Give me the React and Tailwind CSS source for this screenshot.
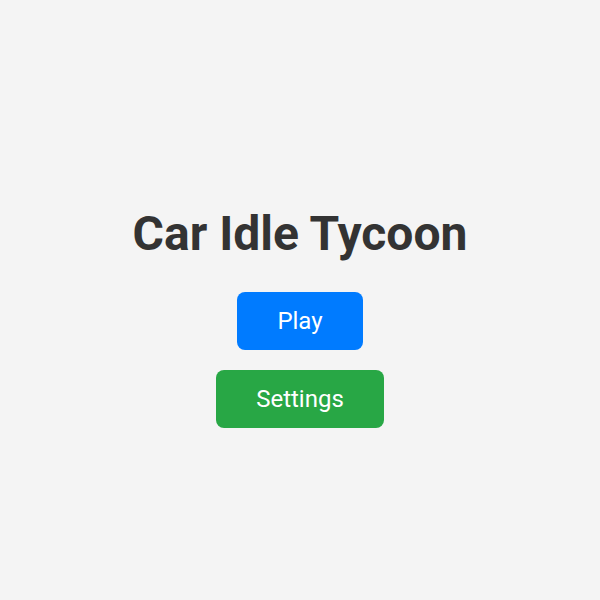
export default function App() {
  return (
    <div
      className="min-h-screen w-full bg-[#f4f4f4] flex flex-col items-center pt-[206px]"
      style={{ fontFamily: 'Roboto, "Liberation Sans", sans-serif' }}
    >
      <h1 className="text-[48px] leading-[56px] font-bold text-[#333333]">
        Car Idle Tycoon
      </h1>

      {/* Menu buttons */}
      <div className="mt-[30px] flex flex-col items-center gap-5">
        <button className="px-10 py-[15px] text-[24px] leading-[28px] text-white bg-[#007bff] rounded-lg">
          Play
        </button>
        <button className="px-10 py-[15px] text-[24px] leading-[28px] text-white bg-[#28a745] rounded-lg">
          Settings
        </button>
      </div>
    </div>
  );
}
